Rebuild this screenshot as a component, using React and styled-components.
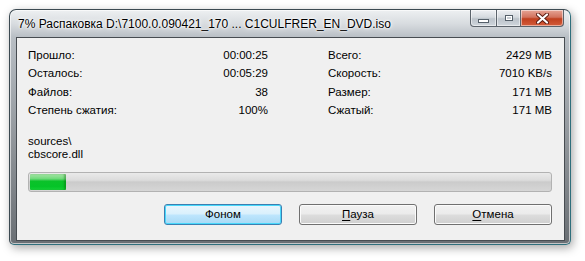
import styled, { createGlobalStyle } from "styled-components";

const Global = createGlobalStyle`
  html, body { margin: 0; background: #ffffff; }
  body { font-family: Tahoma, "Liberation Sans", Arial, sans-serif; }
`;

/* ─── frame ─────────────────────────────────────────── */

const Stage = styled.div`
  padding: 9px 14px 16px 9px;
  width: 562px;
`;

const Window = styled.div`
  height: 236px;
  box-sizing: border-box;
  border: 1px solid #3c4a52;
  border-right-color: #2f6f7c;
  border-bottom-color: #2f6f7c;
  border-radius: 7px 7px 5px 5px;
  background: linear-gradient(
    180deg,
    #eef0f2 0px,
    #d7dbdf 14px,
    #b9bfc5 27px,
    #8d9297 60%,
    #6a6f74 100%
  );
  box-shadow: 0 0 0 1px rgba(255, 255, 255, 0.6) inset,
    2px 3px 10px rgba(0, 0, 0, 0.35);
  display: flex;
  flex-direction: column;
  padding: 0 5px 3px 6px;
`;

const TitleBar = styled.div`
  height: 27px;
  display: flex;
  align-items: flex-start;
  justify-content: space-between;
`;

const Title = styled.span`
  margin: 7px 0 0 2px;
  font-family: "Liberation Sans", Arial, sans-serif;
  font-size: 12px;
  color: #000;
  white-space: nowrap;
  text-shadow: 0 0 6px #fff, 0 0 3px #fff, 0 0 2px #fff;
`;

const Controls = styled.div`
  display: flex;
  margin-right: 1px;
`;

const Ctl = styled.span`
  height: 17px;
  box-sizing: border-box;
  display: flex;
  align-items: center;
  justify-content: center;
  border: 1px solid #5b636b;
  border-top: none;
  width: ${(p) => p.$w}px;
  background: ${(p) =>
    p.$close
      ? "linear-gradient(180deg,#e6a596 0%,#d2735e 45%,#c0401f 55%,#d45c3a 100%)"
      : "linear-gradient(180deg,#eef0f3 0%,#d5dadf 45%,#bcc3ca 55%,#cfd6dc 100%)"};
  border-radius: ${(p) => p.$r};
  box-shadow: inset 0 0 0 1px rgba(255, 255, 255, 0.5);
  & + & {
    border-left: none;
  }
`;

const CtlMin = styled.span`
  width: 9px;
  height: 2px;
  margin-top: 5px;
  background: #fff;
  border: 1px solid #55606a;
`;

const CtlMax = styled.span`
  width: 6px;
  height: 4px;
  border: 1px solid #55606a;
  outline: 1px solid #fff;
  outline-offset: -2px;
  background: #c8ced4;
`;

/* ─── client ────────────────────────────────────────── */

const Client = styled.div`
  flex: 1;
  background: #f0f0f0;
  border: 1px solid #474c51;
  padding: 8px 12px 0 11px;
  font-family: "Liberation Sans", Arial, sans-serif;
  font-size: 11.5px;
  color: #000;
`;

const Stats = styled.div`
  display: grid;
  grid-template-columns: 240px 224px;
  column-gap: 60px;
`;

const Col = styled.div`
  display: flex;
  flex-direction: column;
`;

const Row = styled.div`
  display: flex;
  justify-content: space-between;
  height: 18.4px;
  line-height: 18.4px;
`;

const Path = styled.div`
  margin-top: 15px;
  line-height: 13px;
`;

const Bar = styled.div`
  margin-top: 11px;
  width: 524px;
  height: 20px;
  box-sizing: border-box;
  border: 1px solid #b2b2b2;
  border-radius: 3px;
  background: linear-gradient(180deg, #eaeaea 0%, #dcdcdc 40%, #cbcbcb 50%, #d6d6d6 100%);
  overflow: hidden;
  padding: 1px;
`;

const Fill = styled.div`
  height: 100%;
  border-radius: 1px;
  background: linear-gradient(
    180deg,
    #a8e6a8 0%,
    #6fd97a 30%,
    #0bc22a 45%,
    #05c428 80%,
    #19d43a 100%
  );
  box-shadow: inset -2px 0 2px rgba(0, 90, 0, 0.35);
`;

const Buttons = styled.div`
  margin-top: 12px;
  display: flex;
  justify-content: flex-end;
  gap: 17px;
`;

const Button = styled.button`
  width: 118px;
  height: 21px;
  padding: 0;
  font-family: "Liberation Sans", Arial, sans-serif;
  font-size: 11.5px;
  color: #000;
  border-radius: 3px;
  border: 1px solid ${(p) => (p.$def ? "#3c7fb1" : "#707070")};
  box-shadow: inset 0 0 0 1px ${(p) => (p.$def ? "#48d8fb" : "#fbfbfb")};
  background: ${(p) =>
    p.$def
      ? "linear-gradient(180deg,#eaf6fd 0%,#d9f0fc 48%,#bee6fd 52%,#a7d9f5 100%)"
      : "linear-gradient(180deg,#f2f2f2 0%,#ebebeb 48%,#dddddd 52%,#cfcfcf 100%)"};
  u {
    text-decoration: underline;
    text-underline-offset: 2px;
  }
`;

const left = [
  ["Прошло:", "00:00:25"],
  ["Осталось:", "00:05:29"],
  ["Файлов:", "38"],
  ["Степень сжатия:", "100%"],
];

const right = [
  ["Всего:", "2429 MB"],
  ["Скорость:", "7010 KB/s"],
  ["Размер:", "171 MB"],
  ["Сжатый:", "171 MB"],
];

export default function App() {
  const percent = 7;
  return (
    <>
      <Global />
      <Stage>
        <Window>
          <TitleBar>
            <Title>7% Распаковка D:\7100.0.090421_170 ... C1CULFRER_EN_DVD.iso</Title>
            <Controls>
              <Ctl $w={27} $r="0 0 0 4px">
                <CtlMin />
              </Ctl>
              <Ctl $w={24} $r="0">
                <CtlMax />
              </Ctl>
              <Ctl $w={43} $r="0 0 4px 0" $close>
                <svg width="13" height="11" viewBox="0 0 13 11">
                  <path
                    d="M2 1.5 L11 9.5 M11 1.5 L2 9.5"
                    stroke="#5a1a10"
                    strokeWidth="4"
                    strokeLinecap="round"
                  />
                  <path
                    d="M2 1.5 L11 9.5 M11 1.5 L2 9.5"
                    stroke="#fff"
                    strokeWidth="2.2"
                    strokeLinecap="round"
                  />
                </svg>
              </Ctl>
            </Controls>
          </TitleBar>
          <Client>
            <Stats>
              <Col>
                {left.map(([k, v]) => (
                  <Row key={k}>
                    <span>{k}</span>
                    <span>{v}</span>
                  </Row>
                ))}
              </Col>
              <Col>
                {right.map(([k, v]) => (
                  <Row key={k}>
                    <span>{k}</span>
                    <span>{v}</span>
                  </Row>
                ))}
              </Col>
            </Stats>
            <Path>
              sources\
              <br />
              cbscore.dll
            </Path>
            <Bar>
              <Fill style={{ width: `${percent}%` }} />
            </Bar>
            <Buttons>
              <Button $def>Фоном</Button>
              <Button>
                <u>П</u>ауза
              </Button>
              <Button>
                <u>О</u>тмена
              </Button>
            </Buttons>
          </Client>
        </Window>
      </Stage>
    </>
  );
}
